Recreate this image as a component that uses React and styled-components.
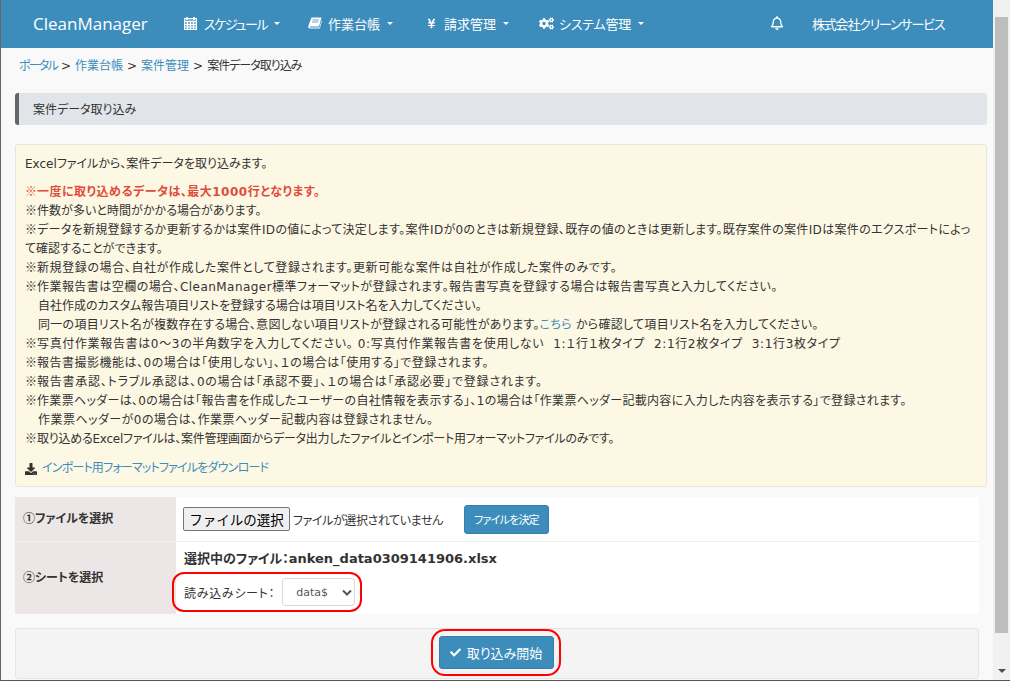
import React from 'react'
import styled, { createGlobalStyle } from 'styled-components'
import { FaCogs, FaRegBell, FaDownload, FaCheck, FaYenSign } from 'react-icons/fa'

const GlobalStyle = createGlobalStyle`
html, body { margin: 0; padding: 0; height: 100%; overflow: hidden; }
body { font-family: "DejaVu Sans", "Noto Sans CJK JP", sans-serif; font-size: 12px; color: #333; font-feature-settings: "palt"; }
* { box-sizing: border-box; }
button { font-feature-settings: "palt"; }
`;

const Shell = styled.div`
display: flex;
width: 1010px;
height: 681px;
overflow: hidden;
border-left: 1px solid #666;
border-bottom: 1px solid #555;
background: #f9f9f9;
`;

const Page = styled.div`
flex: 1;
min-width: 0;
display: flex;
flex-direction: column;
`;

const Navbar = styled.header`
flex: 0 0 48px;
display: flex;
align-items: center;
background: #3c8dbc;
color: #fff;
padding: 0 0 2px 32px;
font-size: 13px;
white-space: nowrap;
`;

const Brand = styled.div`
font-family: "Open Sans", sans-serif;
font-size: 17px;
width: 151px;
`;

const NavItem = styled.div`
display: flex;
align-items: center;
width: ${p => p.$width}px;
svg { flex: 0 0 auto; }
`;

const NavIcon = styled.span`
display: flex;
justify-content: center;
width: ${p => p.$width || 13}px;
margin-right: ${p => p.$gap || 7}px;
`;

const NavLabel = styled.span`
letter-spacing: ${p => p.$track || 0}px;
`;

const Caret = styled.i`
margin-left: 7px;
width: 0;
height: 0;
border-left: 3px solid transparent;
border-right: 3px solid transparent;
border-top: 3px solid #fff;
`;

const NavRight = styled.div`
display: flex;
align-items: center;
margin-left: 130px;
`;

const Company = styled.span`
margin-left: 28px;
letter-spacing: -1.2px;
`;

const Breadcrumb = styled.nav`
display: flex;
gap: 4px;
padding: 10px 0 0 18px;
height: 45px;
line-height: 17px;
`;

const Crumb = styled.a`
color: #3c8dbc;
letter-spacing: ${p => p.$track || 0}px;
`;

const CurrentCrumb = styled.span`
letter-spacing: -1px;
`;

const Content = styled.main`
padding-left: 14px;
padding-right: 6px;
`;

const TitleBar = styled.div`
height: 32px;
line-height: 34px;
background: #e1e5ea;
border-left: 4px solid #666;
border-radius: 3px;
padding-left: 14px;
margin-bottom: 19px;
`;

const Notice = styled.section`
height: 343px;
background: #fdf8e4;
border: 1px solid #e6e6e0;
border-radius: 3px;
padding: 10px 9px 9px;
margin-bottom: 10px;
line-height: 19px;
`;

const Intro = styled.p`
margin: 0 0 9px;
white-space: nowrap;
`;

const Line = styled.div`
height: 19px;
white-space: nowrap;
padding-left: ${p => (p.$indent ? 13 : 0)}px;
color: ${p => (p.$alert ? '#e04b3a' : 'inherit')};
font-weight: ${p => (p.$alert ? 700 : 400)};
letter-spacing: ${p => p.$track || 0}px;
`;

const Kome = styled.span`
font-family: "Noto Sans CJK JP", sans-serif;
font-feature-settings: normal;
letter-spacing: 0;
line-height: 1;
`;

const DownloadLink = styled.div`
display: flex;
align-items: center;
gap: 5px;
margin-top: 10px;
color: #3c8dbc;
letter-spacing: -0.8px;
svg { color: #333; }
`;

const InlineLink = styled.a`
color: #3c8dbc;
`;

const FormTable = styled.div`
width: 964px;
background: #fff;
`;

const FormRow = styled.div`
display: flex;
height: ${p => p.$height}px;
border-bottom: ${p => (p.$last ? 'none' : '1px solid #f0f0f0')};
`;

const FormHead = styled.div`
flex: 0 0 161px;
display: flex;
align-items: center;
padding: 0 0 3px 8px;
background: #ece6e6;
font-weight: 700;
`;

const FormCell = styled.div`
flex: 1;
padding-left: 7px;
`;

const FilePicker = styled.div`
display: flex;
align-items: center;
height: 100%;
`;

const FileButton = styled.button`
width: 107px;
height: 24px;
padding: 0;
background: #efefef;
border: 1px solid #767676;
border-radius: 2px;
font: 13.5px "Noto Sans CJK JP", sans-serif;
color: #000;
`;

const FileStatus = styled.span`
margin-left: 3px;
width: 171px;
letter-spacing: -0.4px;
`;

const SmallButton = styled.button`
width: 85px;
height: 29px;
padding: 0;
background: #3c8dbc;
border: 1px solid #367fa9;
border-radius: 3px;
color: #fff;
font: inherit;
font-size: 11px;
letter-spacing: -0.8px;
`;

const SelectedFile = styled.div`
font-weight: 700;
font-size: 13px;
padding: 8px 0 0 1px;
height: 30px;
line-height: 18px;
`;

const Highlight = styled.div`
display: inline-flex;
align-items: center;
border: 2px solid #f00;
border-radius: 12px;
`;

const SheetBox = styled(Highlight)`
width: 190px;
height: 40px;
margin-left: -11px;
padding-left: 10px;
`;

const SheetLabel = styled.span`
letter-spacing: 0.7px;
`;

const SheetSelect = styled.div`
display: flex;
align-items: center;
justify-content: space-between;
width: 73px;
height: 28px;
margin-left: 7px;
padding: 0 2px 0 13px;
background: #fff;
border: 1px solid #d8d8e0;
border-radius: 3px;
font-size: 11px;
color: #555;
`;

const Footer = styled.div`
width: 964px;
height: 51px;
margin-top: 14px;
display: flex;
justify-content: center;
align-items: center;
background: #f4f4f4;
border: 1px solid #e5e5e5;
border-radius: 3px;
`;

const StartBox = styled(Highlight)`
width: 130px;
height: 47px;
justify-content: center;
border-radius: 14px;
margin-left: -3px;
margin-top: -3px;
padding-left: 1px;
`;

const StartButton = styled.button`
display: flex;
align-items: center;
justify-content: center;
gap: 6px;
width: 115px;
height: 33px;
padding: 0;
background: #3c8dbc;
border: 1px solid #367fa9;
border-radius: 3px;
color: #fff;
font: inherit;
font-size: 13px;
`;

const Scrollbar = styled.aside`
flex: 0 0 17px;
display: flex;
flex-direction: column;
align-items: center;
background: #f1f1f1;
`;

const ArrowUp = styled.i`
flex: 0 0 17px;
width: 0;
height: 0;
margin-top: 6px;
border-left: 4px solid transparent;
border-right: 4px solid transparent;
border-bottom: 4px solid #a3a3a3;
`;

const Thumb = styled.div`
width: 13px;
height: 616px;
margin-top: -6px;
background: #bdbdbd;
`;

const ArrowDown = styled.i`
width: 0;
height: 0;
margin-top: auto;
margin-bottom: 7px;
border-left: 4px solid transparent;
border-right: 4px solid transparent;
border-top: 4px solid #505050;
`;

const CalendarIcon = () => (
  <svg width="13" height="13" viewBox="0 0 13 13" fill="none" stroke="#fff">
    <path d="M3 0v3M10 0v3" strokeWidth="1.6" />
    <rect x="0.5" y="1.5" width="12" height="11" fill="#fff" fillOpacity="0.35" />
    <path d="M0.5 4.5h12M0.5 7.5h12M0.5 10h12M3.5 4.5v8M6.5 4.5v8M9.5 4.5v8" strokeWidth="1" />
  </svg>
)

const BookIcon = () => (
  <svg width="14" height="12" viewBox="0 0 14 12">
    <path d="M3.5 0.5H13.5L11 9.5H2.2C1.6 9.5 1.4 10.5 2.2 10.5H11.5L13.5 3.5L14 4L11.8 11.5H2C0.4 11.5 0 10.2 0.4 8.8Z" fill="#fff" />
    <path d="M4.6 3H10.6M4 5H10" stroke="#3c8dbc" strokeWidth="0.8" />
  </svg>
)

const navItems = [
  { label: 'スケジュール', icon: <CalendarIcon />, width: 124, track: -1.4 },
  { label: '作業台帳', icon: <BookIcon />, width: 119, iconWidth: 14, gap: 6 },
  { label: '請求管理', icon: <FaYenSign size={11} />, iconWidth: 8, width: 112, gap: 9 },
  { label: 'システム管理', icon: <FaCogs size={15} />, iconWidth: 15, gap: 5, width: 101, track: -0.2 },
]

const App = () => {
  return (
    <>
      <GlobalStyle />
      <Shell>
        <Page>
          <Navbar>
            <Brand>CleanManager</Brand>
            {navItems.map(item => (
              <NavItem key={item.label} $width={item.width}>
                <NavIcon $width={item.iconWidth} $gap={item.gap}>{item.icon}</NavIcon>
                <NavLabel $track={item.track}>{item.label}</NavLabel>
                <Caret />
              </NavItem>
            ))}
            <NavRight>
              <FaRegBell size={14} />
              <Company>株式会社クリーンサービス</Company>
            </NavRight>
          </Navbar>
          <Breadcrumb>
            <Crumb $track={-1.8}>ポータル</Crumb><span>&gt;</span>
            <Crumb>作業台帳</Crumb><span>&gt;</span>
            <Crumb>案件管理</Crumb><span>&gt;</span>
            <CurrentCrumb>案件データ取り込み</CurrentCrumb>
          </Breadcrumb>
          <Content>
            <TitleBar>案件データ取り込み</TitleBar>
            <Notice>
              <Intro>Excelファイルから、案件データを取り込みます。</Intro>
              <Line $alert $track={0.5}><Kome>※</Kome>一度に取り込めるデータは、最大1000行となります。</Line>
              <Line $track={0.05}><Kome>※</Kome>件数が多いと時間がかかる場合があります。</Line>
              <Line $track={0.33}><Kome>※</Kome>データを新規登録するか更新するかは案件IDの値によって決定します。案件IDが0のときは新規登録、既存の値のときは更新します。既存案件の案件IDは案件のエクスポートによっ</Line>
              <Line>て確認することができます。</Line>
              <Line $track={0.6}><Kome>※</Kome>新規登録の場合、自社が作成した案件として登録されます。更新可能な案件は自社が作成した案件のみです。</Line>
              <Line $track={0.45}><Kome>※</Kome>作業報告書は空欄の場合、CleanManager標準フォーマットが登録されます。報告書写真を登録する場合は報告書写真と入力してください。</Line>
              <Line $indent>自社作成のカスタム報告項目リストを登録する場合は項目リスト名を入力してください。</Line>
              <Line $indent $track={0.28}>同一の項目リスト名が複数存在する場合、意図しない項目リストが登録される可能性があります。<InlineLink>こちら</InlineLink> から確認して項目リスト名を入力してください。</Line>
              <Line $track={0.65}><Kome>※</Kome>写真付作業報告書は0～3の半角数字を入力してください。 0:写真付作業報告書を使用しない&nbsp;&nbsp;1:１行１枚タイプ&nbsp;&nbsp;2:1行2枚タイプ&nbsp;&nbsp;3:1行3枚タイプ</Line>
              <Line $track={0.5}><Kome>※</Kome>報告書撮影機能は、0の場合は「使用しない」、１の場合は「使用する」で登録されます。</Line>
              <Line $track={0.75}><Kome>※</Kome>報告書承認、トラブル承認は、0の場合は「承認不要」、１の場合は「承認必要」で登録されます。</Line>
              <Line $track={0.32}><Kome>※</Kome>作業票ヘッダーは、0の場合は「報告書を作成したユーザーの自社情報を表示する」、1の場合は「作業票ヘッダー記載内容に入力した内容を表示する」で登録されます。</Line>
              <Line $indent $track={0.45}>作業票ヘッダーが0の場合は、作業票ヘッダー記載内容は登録されません。</Line>
              <Line $track={-0.25}><Kome>※</Kome>取り込めるExcelファイルは、案件管理画面からデータ出力したファイルとインポート用フォーマットファイルのみです。</Line>
              <DownloadLink><FaDownload size={12} />インポート用フォーマットファイルをダウンロード</DownloadLink>
            </Notice>
            <FormTable>
              <FormRow $height={45}>
                <FormHead><Kome>①</Kome>ファイルを選択</FormHead>
                <FormCell>
                  <FilePicker>
                    <FileButton>ファイルの選択</FileButton>
                    <FileStatus>ファイルが選択されていません</FileStatus>
                    <SmallButton>ファイルを決定</SmallButton>
                  </FilePicker>
                </FormCell>
              </FormRow>
              <FormRow $height={72} $last>
                <FormHead><Kome>②</Kome>シートを選択</FormHead>
                <FormCell>
                  <SelectedFile>選択中のファイル：anken_data0309141906.xlsx</SelectedFile>
                  <SheetBox>
                    <SheetLabel>読み込みシート：</SheetLabel>
                    <SheetSelect>
                      data$
                      <svg width="10" height="7" viewBox="0 0 10 7"><path d="M1 1.5 L5 5.5 L9 1.5" fill="none" stroke="#555" strokeWidth="2" /></svg>
                    </SheetSelect>
                  </SheetBox>
                </FormCell>
              </FormRow>
            </FormTable>
            <Footer>
              <StartBox>
                <StartButton><FaCheck size={11} />取り込み開始</StartButton>
              </StartBox>
            </Footer>
          </Content>
        </Page>
        <Scrollbar>
          <ArrowUp />
          <Thumb />
          <ArrowDown />
        </Scrollbar>
      </Shell>
    </>
  )
}

export default App
